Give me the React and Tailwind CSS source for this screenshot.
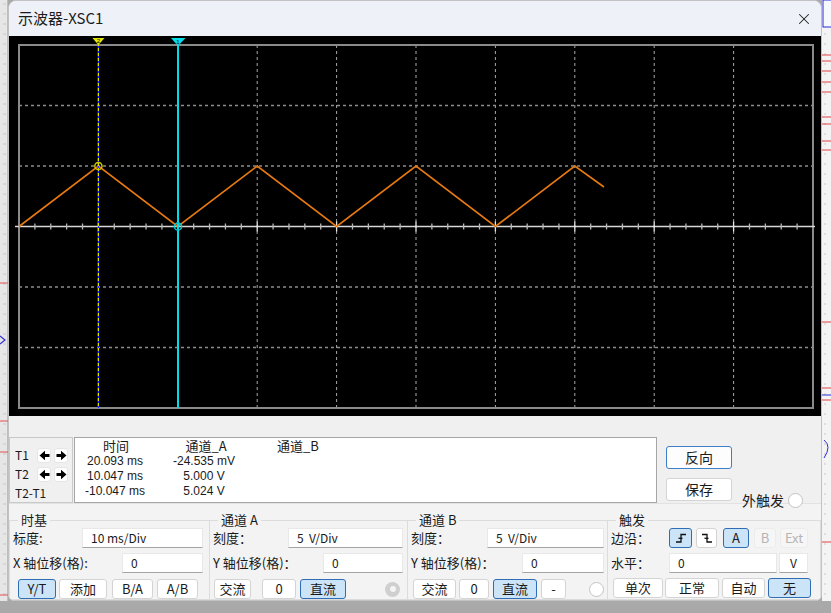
import React from 'react';
import { X } from 'lucide-react';

const DIV_X = 79.4;
const DIV_Y = 60.5;
const LEFT = 10;
const TOP = 9;

const wave = [
  [10, 190.5], [89.4, 130], [168.8, 190.5], [248.2, 130], [327.6, 190.5],
  [407, 130], [486.4, 190.5], [565.8, 130], [595, 151],
];

function Scope() {
  const vLines = [1, 2, 3, 4, 5, 6, 7, 8, 9].map((i) => LEFT + i * DIV_X);
  const hLines = [1, 2, 4, 5].map((j) => TOP + j * DIV_Y);
  const axisY = TOP + 3 * DIV_Y;
  const ticks = Array.from({ length: 49 }, (_, k) => k + 1);

  return (
    <svg width="812" height="380" viewBox="0 0 812 380" className="block">
      {vLines.map((x) => (
        <line key={x} x1={x} y1={TOP} x2={x} y2={372} stroke="#a8a8a8" strokeDasharray="3 3" />
      ))}
      {hLines.map((y) => (
        <line key={y} x1={LEFT} y1={y} x2={804} y2={y} stroke="#8c8c8c" strokeWidth="1.3" strokeDasharray="3 3" />
      ))}
      <rect x={LEFT} y={TOP} width="794" height="363" fill="none" stroke="#8a8a8a" strokeWidth="2" />
      <line x1={6} y1={axisY} x2={806} y2={axisY} stroke="#d8d8d8" strokeWidth="1.6" />
      {ticks.map((k) => {
        const x = LEFT + k * (DIV_X / 5);
        const major = k % 5 === 0;
        return (
          <line
            key={k}
            x1={x}
            x2={x}
            y1={major ? axisY - 5 : axisY - 3}
            y2={major ? axisY + 5 : axisY + 3}
            stroke={major ? '#e6e6e6' : '#b8b8b8'}
            strokeWidth="1.3"
          />
        );
      })}
      <polyline
        points={wave.map((p) => p.join(',')).join(' ')}
        fill="none"
        stroke="#e8790f"
        strokeWidth="1.6"
      />
      {/* T2 cursor (yellow, dashed over blue) */}
      <line x1="89.4" y1="7" x2="89.4" y2="372" stroke="#2a2aff" strokeWidth="1.2" />
      <line x1="89.4" y1="7" x2="89.4" y2="372" stroke="#e8e800" strokeWidth="1.2" strokeDasharray="3 2" />
      <polygon points="83.5,2 95.5,2 89.4,9" fill="#e6e600" />
      <text x="89.4" y="7.2" fontSize="6" textAnchor="middle" fill="#000" fontFamily="Liberation Sans, sans-serif">2</text>
      <circle cx="89.4" cy="130" r="3.6" fill="none" stroke="#c8c800" strokeWidth="1.5" />
      {/* T1 cursor (cyan) */}
      <line x1="169" y1="7" x2="169" y2="372" stroke="#00dde8" strokeWidth="2" />
      <polygon points="162,2 176.5,2 169,10" fill="#00dde8" />
      <text x="169" y="7.5" fontSize="6" textAnchor="middle" fill="#000" fontFamily="Liberation Sans, sans-serif">1</text>
      <circle cx="169" cy="190.5" r="3.6" fill="none" stroke="#00c8d2" strokeWidth="1.5" />
    </svg>
  );
}

function Btn({ children, active, disabled, focus, className = '' }) {
  const tone = active
    ? 'bg-[#cce4f7] border-[#2f6db5] text-[#1a1a1a]'
    : disabled
    ? 'bg-[#f6f6f6] border-[#ececec] text-[#b4b4b4]'
    : focus
    ? 'bg-[#fdfdfd] border-[#3b80c9] text-[#1a1a1a]'
    : 'bg-white border-[#d4d4d4] text-[#1a1a1a]';
  return (
    <div className={`flex items-center justify-center rounded-[3px] border text-[13px] ${tone} ${className}`}>
      {children}
    </div>
  );
}

function Field({ value, className = '' }) {
  return (
    <div className={`h-[20px] flex items-center bg-white border border-[#e8e8e8] border-b-[#a4a4a4] pl-[8px] text-[12px] text-[#1a1a1a] ${className}`}>
      {value}
    </div>
  );
}

function Radio({ filled }) {
  return filled ? (
    <div className="w-[15px] h-[15px] rounded-full bg-[#cfcfcf] flex items-center justify-center">
      <div className="w-[6px] h-[6px] rounded-full bg-[#f4f4f4]" />
    </div>
  ) : (
    <div className="w-[15px] h-[15px] rounded-full bg-white border border-[#c4c4c4]" />
  );
}

function Group({ title, className = '', children }) {
  return (
    <fieldset className={`h-[88px] border-t border-r border-b border-[#dcdcdc] pl-[3px] ${className}`}>
      <legend className="ml-[5px] px-[3px] text-[13px] leading-[16px] text-[#1a1a1a]">{title}</legend>
      {children}
    </fieldset>
  );
}

// bold block arrows used on the cursor step buttons
function StepArrow({ right }) {
  return (
    <svg width="11" height="11" viewBox="0 0 11 11">
      <path
        d={right ? 'M0.5 4 H5 V0.8 L10.5 5.5 L5 10.2 V7 H0.5 Z' : 'M10.5 4 H6 V0.8 L0.5 5.5 L6 10.2 V7 H10.5 Z'}
        fill="#000"
      />
    </svg>
  );
}

function Arrows() {
  return (
    <>
      <div className="w-[14px] h-[15px] rounded-[3px] bg-white border border-[#e6e6e6] flex items-center justify-center">
        <StepArrow />
      </div>
      <div className="w-[14px] h-[15px] ml-[3px] rounded-[3px] bg-white border border-[#e6e6e6] flex items-center justify-center">
        <StepArrow right />
      </div>
    </>
  );
}

function EdgeIcon({ falling }) {
  return (
    <svg width="14" height="14" viewBox="0 0 14 14">
      <path
        d={falling ? 'M2 3.5 H7 V11 H12' : 'M2 11 H7 V3.5 H12'}
        fill="none"
        stroke="#111"
        strokeWidth="1.3"
      />
      <path d="M4.5 7.3 H8.5" stroke="#111" strokeWidth="1.3" />
    </svg>
  );
}

function LeftStrip() {
  const marks = Array.from({ length: 60 }, (_, i) => i * 10 + 4);
  return (
    <div className="w-[8px] h-[601px] bg-[#e6e6e6]">
      <svg width="8" height="601" className="block">
        {marks.map((y) => (
          <line key={y} x1="3" x2="6" y1={y} y2={y} stroke="#c6c6c6" />
        ))}
        <line x1="7.5" y1="0" x2="7.5" y2="601" stroke="#bdbdbd" />
        <line x1="0" x2="8" y1="283" y2="283" stroke="#e05050" />
        <line x1="0" x2="8" y1="421" y2="421" stroke="#e05050" />
        <line x1="0" x2="8" y1="452" y2="452" stroke="#e05050" />
        <line x1="0" x2="8" y1="595" y2="595" stroke="#e05050" />
        <path d="M0 336 L5 340 L0 344" fill="none" stroke="#3030d0" strokeWidth="1.2" />
      </svg>
    </div>
  );
}

function RightStrip() {
  const reds = [55, 61, 71, 82, 92, 117, 124, 141, 150, 322, 388, 400, 542];
  const marks = Array.from({ length: 60 }, (_, i) => i * 10 + 4);
  return (
    <div className="flex-1 h-[601px] bg-[#f4f4f4]">
      <svg width="9" height="601" className="block">
        {marks.map((y) => (
          <line key={y} x1="2" x2="4" y1={y} y2={y} stroke="#c8c8c8" />
        ))}
        {reds.map((y) => (
          <line key={y} x1="0" x2="9" y1={y} y2={y} stroke="#e04545" />
        ))}
        <rect x="1" y="0" width="9" height="27" fill="#f8f8ff" stroke="#2a2ad8" />
        <line x1="0" x2="9" y1="395" y2="395" stroke="#2a2ad8" />
        <path d="M2 440 Q10 446 2 458" fill="none" stroke="#2a2ad8" />
      </svg>
    </div>
  );
}

export default function App() {
  return (
    <div className="w-[831px] h-[613px] bg-[#a9a9a9] flex items-start overflow-hidden font-['Noto_Sans_CJK_SC','Noto_Sans',sans-serif]">
      <LeftStrip />
      <div className="w-[814px] h-[601px] flex flex-col rounded-t-[8px] rounded-b-[6px] border border-[#c2c2c2] bg-[#f0f0f0] overflow-hidden">
        {/* title bar */}
        <div className="h-[35px] flex items-center justify-between bg-[#eef2f8] pl-[9px] pr-[8px]">
          <span className="text-[15px] text-[#1c1c1c]">示波器-XSC1</span>
          <X size={18} strokeWidth={1.4} className="text-[#222]" />
        </div>

        {/* screen */}
        <div className="h-[380px] bg-black">
          <Scope />
        </div>

        <div className="h-[21px]" />

        {/* readout row */}
        <div className="h-[66px] flex">
          <div className="w-[64px] border border-[#c9c9c9] bg-[#f0f0f0] pl-[5px] pt-[9px] text-[12px] text-[#1a1a1a]">
            <div className="h-[16px] flex items-center">
              <span className="w-[22px]">T1</span>
              <Arrows />
            </div>
            <div className="h-[16px] mt-[3px] flex items-center">
              <span className="w-[22px]">T2</span>
              <Arrows />
            </div>
            <div className="h-[16px] mt-[3px] leading-[16px]">T2-T1</div>
          </div>

          <div className="w-[583px] ml-[1px] bg-white border border-[#a6a6a6] text-[#1a1a1a]">
            <div className="grid grid-cols-[82px_98px_86px] text-center text-[13px] leading-[16px]">
              <span>时间</span>
              <span>通道_A</span>
              <span>通道_B</span>
            </div>
            <div className="grid grid-cols-[80px_98px_86px] text-center text-[12px] leading-[15px] font-['Liberation_Sans',sans-serif]">
              <span>20.093 ms</span>
              <span>-24.535 mV</span>
              <span />
              <span>10.047 ms</span>
              <span>5.000 V</span>
              <span />
              <span>-10.047 ms</span>
              <span>5.024 V</span>
              <span />
            </div>
          </div>

          <div className="ml-[9px] pt-[9px] flex flex-col">
            <Btn focus className="w-[66px] h-[23px] text-[14px]">反向</Btn>
            <Btn className="w-[66px] h-[23px] mt-[9px] text-[14px]">保存</Btn>
          </div>

          <div className="ml-[10px] pt-[55px] relative z-10">
            <div className="h-[16px] flex items-center">
              <span className="text-[14px] leading-[16px] text-[#1a1a1a]">外触发</span>
              <div className="ml-[4px]">
                <Radio />
              </div>
            </div>
          </div>
        </div>

        {/* control groups */}
        <div className="h-[97px] flex border-t border-[#e2e2e2] bg-[#f3f3f3] pt-[8px] text-[13px] text-[#1a1a1a]">
          <Group title="时基" className="w-[201px] border-l">
            <div className="flex items-center justify-between pr-[6px]">
              <span>标度:</span>
              <Field value="10 ms/Div" className="w-[121px]" />
            </div>
            <div className="flex items-center justify-between pr-[6px] mt-[5px]">
              <span>X 轴位移(格):</span>
              <Field value="0" className="w-[81px]" />
            </div>
            <div className="flex items-center mt-[6px] pl-[5px]">
              <Btn active className="w-[38px] h-[20px] text-[12px]">Y/T</Btn>
              <Btn className="w-[48px] h-[20px] ml-[3px]">添加</Btn>
              <Btn className="w-[41px] h-[20px] ml-[5px] text-[12px]">B/A</Btn>
              <Btn className="w-[41px] h-[20px] ml-[4px] text-[12px]">A/B</Btn>
            </div>
          </Group>

          <Group title="通道 A" className="w-[198px]">
            <div className="flex items-center justify-between pr-[4px]">
              <span>刻度：</span>
              <Field value="5  V/Div" className="w-[115px] whitespace-pre" />
            </div>
            <div className="flex items-center justify-between pr-[4px] mt-[5px]">
              <span>Y 轴位移(格)：</span>
              <Field value="0" className="w-[80px]" />
            </div>
            <div className="flex items-center mt-[6px] pl-[1px]">
              <Btn className="w-[37px] h-[20px]">交流</Btn>
              <Btn className="w-[34px] h-[20px] ml-[11px] text-[12px]">0</Btn>
              <Btn active className="w-[46px] h-[20px] ml-[4px]">直流</Btn>
              <div className="ml-[39px]">
                <Radio filled />
              </div>
            </div>
          </Group>

          <Group title="通道 B" className="w-[200px]">
            <div className="flex items-center justify-between pr-[3px]">
              <span>刻度：</span>
              <Field value="5  V/Div" className="w-[117px] whitespace-pre" />
            </div>
            <div className="flex items-center justify-between pr-[3px] mt-[5px]">
              <span>Y 轴位移(格)：</span>
              <Field value="0" className="w-[82px]" />
            </div>
            <div className="flex items-center mt-[6px] pl-[2px]">
              <Btn className="w-[43px] h-[20px]">交流</Btn>
              <Btn className="w-[30px] h-[20px] ml-[3px] text-[12px]">0</Btn>
              <Btn active className="w-[44px] h-[20px] ml-[4px]">直流</Btn>
              <Btn className="w-[25px] h-[20px] ml-[4px] text-[12px]">-</Btn>
              <div className="ml-[23px]">
                <Radio />
              </div>
            </div>
          </Group>

          <Group title="触发" className="w-[213px]">
            <div className="flex items-center">
              <span className="w-[58px]">边沿：</span>
              <Btn active className="w-[23px] h-[20px]"><EdgeIcon /></Btn>
              <Btn className="w-[21px] h-[20px] ml-[4px]"><EdgeIcon falling /></Btn>
              <Btn active className="w-[26px] h-[20px] ml-[6px] text-[12px]">A</Btn>
              <Btn disabled className="w-[22px] h-[20px] ml-[5px] text-[12px]">B</Btn>
              <Btn disabled className="w-[28px] h-[20px] ml-[4px] text-[12px]">Ext</Btn>
            </div>
            <div className="flex items-center mt-[5px]">
              <span className="w-[58px]">水平：</span>
              <Field value="0" className="w-[108px] pl-[3px]" />
              <Field value="V" className="w-[29px] ml-[2px] pl-[10px]" />
            </div>
            <div className="flex items-center mt-[5px] pl-[2px]">
              <Btn className="w-[50px] h-[20px]">单次</Btn>
              <Btn className="w-[54px] h-[20px] ml-[2px]">正常</Btn>
              <Btn className="w-[43px] h-[20px] ml-[3px]">自动</Btn>
              <Btn active className="w-[43px] h-[20px] ml-[3px]">无</Btn>
            </div>
          </Group>
        </div>
      </div>
      <RightStrip />
    </div>
  );
}
